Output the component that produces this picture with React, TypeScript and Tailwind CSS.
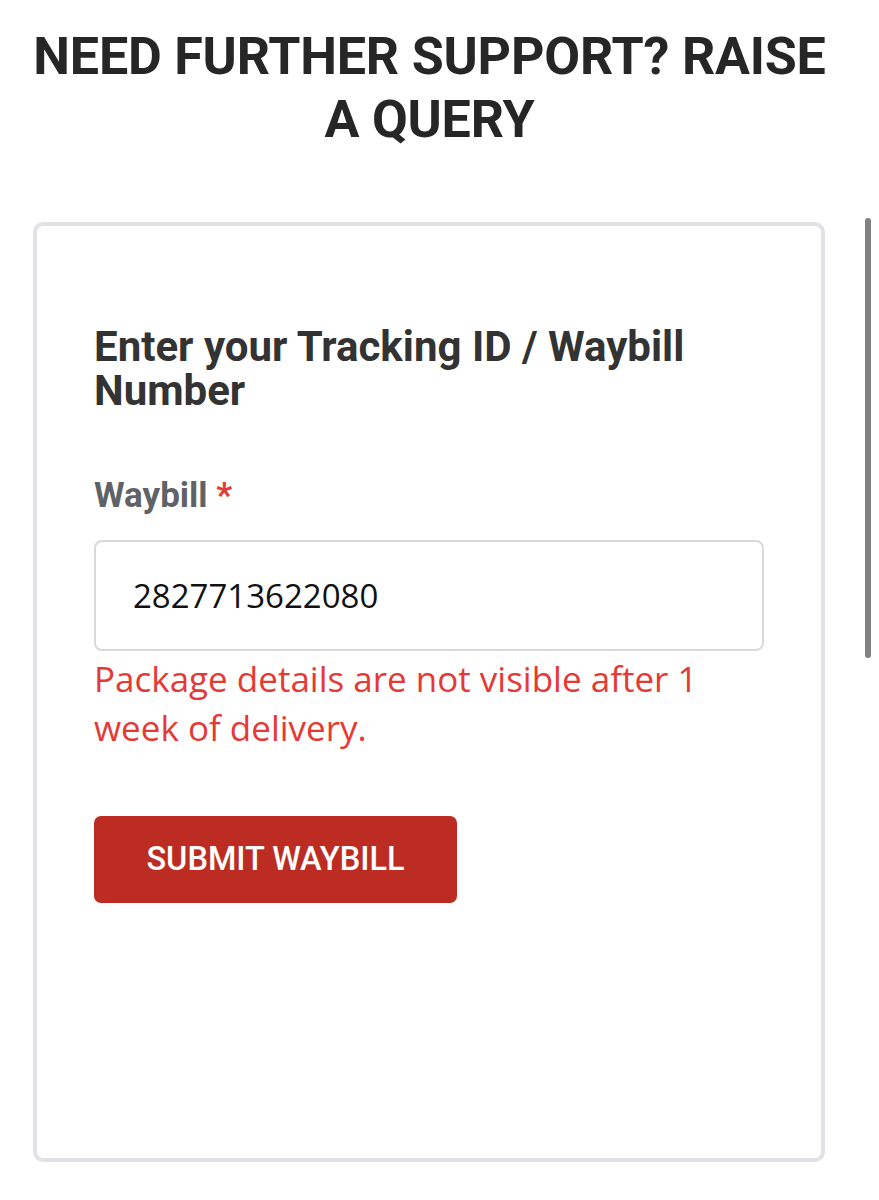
export default function App() {
  return (
    <div className="relative w-[879px] h-[1200px] bg-white overflow-hidden" style={{ fontFamily: "Roboto, 'Noto Sans', sans-serif" }}>
      <div className="absolute right-[8px] top-[218px] w-[6px] h-[440px] rounded-full bg-[#808080]" />
      <h1 className="pt-[25px] pl-[10px] pr-[30px] text-center font-bold text-[52px] leading-[63px] text-[#262626] tracking-[-0.2px]">
        NEED FURTHER SUPPORT? RAISE A QUERY
      </h1>
      <div className="mt-[71px] ml-[33px] w-[792px] h-[940px] border-[4px] border-[#e0e2e5] rounded-[10px] pl-[57px] pr-[40px] pt-[99px]">
        <h2 className="font-bold text-[42px] leading-[44px] text-[#333333]">
          Enter your Tracking ID / Waybill Number
        </h2>
        <div className="mt-[61px] font-bold text-[35px] leading-[44px] text-[#5f6368]">
          Waybill <span className="text-[#e53935]">*</span>
        </div>
        <div className="mt-[22px] h-[111px] w-[670px] border-[2px] border-[#d9d9d9] rounded-[8px] flex items-center pl-[37px] text-[33px] text-[#111]" style={{ fontFamily: "'Open Sans', sans-serif" }}>
          2827713622080
        </div>
        <p className="mt-[3px] text-[35px] leading-[49px] text-[#e53935] w-[660px]" style={{ fontFamily: "'Open Sans', sans-serif" }}>
          Package details are not visible after 1 week of delivery.
        </p>
        <button className="mt-[64px] w-[363px] h-[87px] rounded-[7px] bg-[#bd2c22] text-white text-[32.5px] font-medium">
          SUBMIT WAYBILL
        </button>
      </div>
    </div>
  );
}
